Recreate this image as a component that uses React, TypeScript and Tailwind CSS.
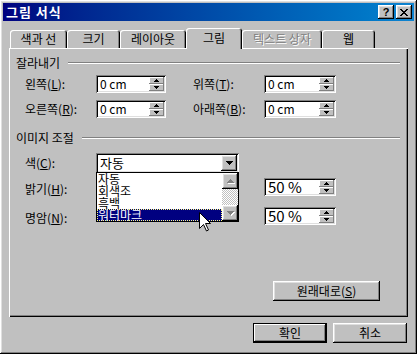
import type { ReactNode } from 'react';

const raised =
  'shadow-[inset_-1px_-1px_0_#000,inset_1px_1px_0_#fff,inset_-2px_-2px_0_#808080,inset_2px_2px_0_#dfdfdf]';
const raisedThin = 'shadow-[inset_-1px_-1px_0_#808080,inset_1px_1px_0_#fff]';
const sunken =
  'shadow-[inset_1px_1px_0_#808080,inset_-1px_-1px_0_#fff,inset_2px_2px_0_#000,inset_-2px_-2px_0_#dfdfdf]';

const Arrow = ({ up, gray }: { up?: boolean; gray?: boolean }) => (
  <svg width="7" height="4" viewBox="0 0 7 4" className={gray ? 'drop-shadow-[1px_1px_0_#fff]' : ''}>
    <path d={up ? 'M3 0h1v1h1v1h1v1h1v1H0V3h1V2h1V1h1z' : 'M0 0h7v1H6v1H5v1H4v1H3V3H2V2H1V1H0z'} fill={gray ? '#808080' : '#000'} />
  </svg>
);

const SmallArrow = ({ up }: { up?: boolean }) => (
  <svg width="5" height="3" viewBox="0 0 5 3">
    <path d={up ? 'M2 0h1v1h1v1h1v1H0V2h1V1h1z' : 'M0 0h5v1H4v1H3v1H2V2H1V1H0z'} fill="#000" />
  </svg>
);

function SpinField({ value, width, big }: { value: string; width: string; big?: boolean }) {
  return (
    <div className={`flex h-[18px] items-center bg-white ${width} ${sunken}`}>
      <span className={big ? 'pl-[4px] text-[15px] leading-[15px]' : 'pl-[4px] text-[12px] leading-[12px]'}>{value}</span>
      <div className="ml-auto mr-[2px] flex flex-col">
        <div className={`flex h-[7px] w-[15px] items-center justify-center bg-[#c0c0c0] ${raisedThin}`}>
          <SmallArrow up />
        </div>
        <div className={`flex h-[7px] w-[15px] items-center justify-center bg-[#c0c0c0] ${raisedThin}`}>
          <SmallArrow />
        </div>
      </div>
    </div>
  );
}

function GroupHeader({ children }: { children: ReactNode }) {
  return (
    <div className="flex h-[14px] items-center gap-[8px] pl-[7px] pr-[8px]">
      <span className="leading-[14px]">{children}</span>
      <div className="h-[2px] flex-1 border-t border-b border-t-[#808080] border-b-white" />
    </div>
  );
}

function Tab({ label, width, active, disabled }: { label: string; width: string; active?: boolean; disabled?: boolean }) {
  return (
    <div
      className={`flex items-center justify-center rounded-t-[3px] bg-[#c0c0c0] shadow-[inset_1px_1px_0_#fff,inset_-1px_0_0_#000,inset_-2px_0_0_#808080] ${width} ${
        active ? 'relative z-10 -mb-[1px] h-[21px] pb-[2px]' : 'h-[18px]'
      } ${disabled ? 'text-[#808080] [text-shadow:1px_1px_0_#fff]' : ''}`}
    >
      {label}
    </div>
  );
}

function Button({ children, width, isDefault }: { children: ReactNode; width: string; isDefault?: boolean }) {
  return (
    <div
      className={`flex h-[20px] items-center justify-center bg-[#c0c0c0] ${width} ${
        isDefault
          ? 'shadow-[inset_0_0_0_1px_#000,inset_-2px_-2px_0_#000,inset_2px_2px_0_#fff,inset_-3px_-3px_0_#808080]'
          : raised
      }`}
    >
      {children}
    </div>
  );
}

export default function App() {
  return (
    <div
      className={`relative h-[354px] w-[417px] bg-[#c0c0c0] p-[3px] text-[12px] leading-[14px] text-black font-['Noto_Sans_CJK_KR','Liberation_Sans',sans-serif] ${raised}`}
    >
      {/* Title bar */}
      <div className="flex h-[18px] items-center bg-linear-to-r from-[#000080] to-[#1084d0] pl-[3px] pr-[2px]">
        <span className="text-[13px] font-bold tracking-[1px] text-white">그림 서식</span>
        <div className="ml-auto flex gap-[2px]">
          <div className={`flex h-[14px] w-[16px] items-center justify-center bg-[#c0c0c0] text-[11px] font-bold leading-[11px] font-['Liberation_Sans',sans-serif] ${raised}`}>
            ?
          </div>
          <div className={`flex h-[14px] w-[16px] items-center justify-center bg-[#c0c0c0] ${raised}`}>
            <svg width="8" height="7" viewBox="0 0 8 7">
              <path d="M0 0h2v1h1v1h2V1h1V0h2v1H7v1H6v1H5v1h1v1h1v1h1v1H6V6H5V5H3v1H2v1H0V6h1V5h1V4h1V3H2V2H1V1H0z" fill="#000" />
            </svg>
          </div>
        </div>
      </div>

      <div className="px-[6px] pt-[7px]">
        {/* Tabs */}
        <div className="flex h-[20px] items-end pl-[1px]">
          <Tab label="색과 선" width="w-[57px]" />
          <Tab label="크기" width="w-[53px]" />
          <Tab label="레이아웃" width="w-[66px]" />
          <Tab label="그림" width="w-[56px]" active />
          <Tab label="텍스트 상자" width="w-[80px]" disabled />
          <Tab label="웹" width="w-[53px]" />
        </div>

        {/* Panel */}
        <div className="relative h-[269px] w-[399px] shadow-[inset_1px_1px_0_#fff,inset_-1px_-1px_0_#000,inset_-2px_-2px_0_#808080]">
          <div className="flex flex-col pt-[8px]">
            <GroupHeader>잘라내기</GroupHeader>

            <div className="mt-[5px] flex h-[18px] items-center pl-[16px]">
              <span className="w-[71px]">
                왼쪽(<u>L</u>):
              </span>
              <SpinField value="0 cm" width="w-[70px]" />
              <span className="ml-[27px] w-[71px]">
                위쪽(<u>T</u>):
              </span>
              <SpinField value="0 cm" width="w-[72px]" />
            </div>

            <div className="mt-[7px] flex h-[18px] items-center pl-[16px]">
              <span className="w-[71px]">
                오른쪽(<u>R</u>):
              </span>
              <SpinField value="0 cm" width="w-[70px]" />
              <span className="ml-[27px] w-[71px]">
                아래쪽(<u>B</u>):
              </span>
              <SpinField value="0 cm" width="w-[72px]" />
            </div>

            <div className="mt-[13px]">
              <GroupHeader>이미지 조절</GroupHeader>
            </div>

            <div className="mt-[8px] flex h-[20px] items-center pl-[16px]">
              <span className="w-[71px]">
                색(<u>C</u>):
              </span>
              <div className={`flex h-[20px] w-[143px] items-center bg-white ${sunken}`}>
                <span className="pl-[4px] text-[13px]">자동</span>
                <div className={`ml-auto mr-[2px] flex h-[16px] w-[16px] items-center justify-center bg-[#c0c0c0] ${raised}`}>
                  <Arrow />
                </div>
              </div>
            </div>

            <div className="mt-[5px] flex h-[17px] items-center pl-[16px]">
              <span className="w-[239px] pt-[4px]">
                밝기(<u>H</u>):
              </span>
              <SpinField value="50 %" width="w-[72px]" big />
            </div>

            <div className="mt-[12px] flex h-[17px] items-center pl-[16px]">
              <span className="w-[239px] pt-[4px]">
                명암(<u>N</u>):
              </span>
              <SpinField value="50 %" width="w-[72px]" big />
            </div>

            <div className="mt-[57px] flex pl-[264px]">
              <Button width="w-[107px]">
                원래대로(<u>S</u>)
              </Button>
            </div>
          </div>

          {/* Open colour list */}
          <div className="absolute left-[87px] top-[124px] z-20 flex h-[50px] w-[143px] border border-black bg-white text-[12px] leading-[12px]">
            <div className="flex flex-1 flex-col overflow-hidden">
              <div className="h-[12px] pl-[1px]">자동</div>
              <div className="h-[12px] pl-[1px]">회색조</div>
              <div className="h-[12px] pl-[1px]">흑백</div>
              <div className="h-[12px] border border-dotted border-[#ffff80] bg-[#000080] leading-[10px] text-white">워터마크</div>
            </div>
            <div className="flex w-[16px] flex-col">
              <div className={`flex h-[16px] items-center justify-center bg-[#c0c0c0] ${raised}`}>
                <Arrow up gray />
              </div>
              <div className="flex-1 bg-[image:repeating-conic-gradient(#c0c0c0_0_25%,#ffffff_0_50%)] bg-[length:2px_2px]" />
              <div className={`flex h-[16px] items-center justify-center bg-[#c0c0c0] ${raised}`}>
                <Arrow gray />
              </div>
            </div>
          </div>
        </div>

        {/* Dialog buttons */}
        <div className="mt-[6px] flex w-[399px] justify-end gap-[6px] pr-[1px]">
          <Button width="w-[74px]" isDefault>
            확인
          </Button>
          <Button width="w-[74px]">취소</Button>
        </div>
      </div>

      {/* Mouse pointer */}
      <svg className="absolute left-[199px] top-[212px] z-30" width="13" height="20" viewBox="0 0 13 20">
        <path d="M0.5 0.5V16.5L4.5 12.5L7.5 19L9.5 18L6.5 11.5H11.5Z" fill="#fff" stroke="#000" strokeWidth="1" />
      </svg>
    </div>
  );
}
